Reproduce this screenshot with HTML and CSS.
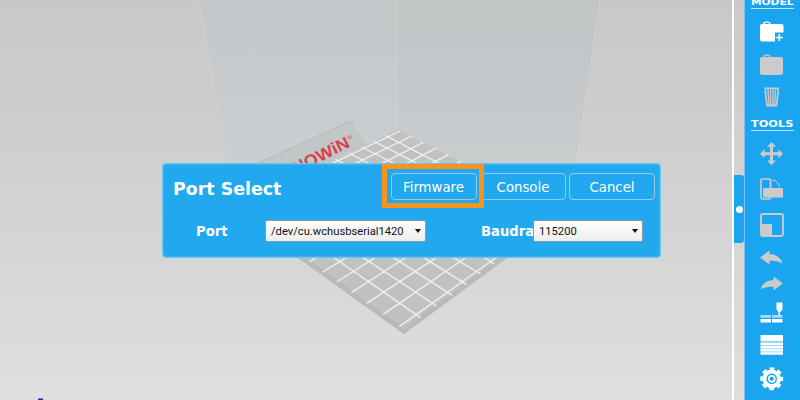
FILE: index.html
```html
<!DOCTYPE html>
<html lang="en">
<head>
<meta charset="utf-8">
<title>Port Select</title>
<link rel="stylesheet" href="styles.css">
</head>
<body>
<div class="app">
  <main class="viewport">
    <svg class="scene" width="732" height="400" viewBox="0 0 732 400">
      <defs>
        <linearGradient id="wallL" x1="0" y1="0" x2="0" y2="1"><stop offset="0" stop-color="#c3c7ca"/><stop offset="1" stop-color="#cbcfd1"/></linearGradient>
        <linearGradient id="wallR" x1="0" y1="0" x2="0" y2="1"><stop offset="0" stop-color="#c2c5c5"/><stop offset=".4" stop-color="#c3c7ca"/><stop offset="1" stop-color="#cacdce"/></linearGradient>
      </defs>
      <path d="M199 0H396V170H229Z" fill="url(#wallL)"/>
      <path d="M396 0H600L574 170H396Z" fill="url(#wallR)"/>
      <path d="M199 0L229 170M396.3 0V130" stroke="#d0d1d1" fill="none"/>
      <path d="M600 0L574 170" stroke="#cbcccc" fill="none"/>
      <path d="M250 168L347 123Q350 121 352.500 123L368 146L320 172Z" fill="#c2c6c7"/>
      <path d="M250 167L348 122.500Q351 121 353 124" stroke="#b9bec0" stroke-width="1.500" fill="none"/>
      <text class="brand" transform="matrix(.88 -.44 .45 .87 284 180)" x="0" y="0" textLength="76" lengthAdjust="spacingAndGlyphs">ANOWiN</text>
      <text class="mark" x="348.500" y="140" transform="rotate(-25 348.500 140)">®</text>
      <path d="M397 130L566 214L404 334L235 212Z" fill="#c1c1c1"/>
      <path d="M298 258L404 334L507 258L500 258L404 328L307 258Z" fill="#b9b9b9"/>
      <g class="grid" transform="translate(195 0) scale(.33333)">
        <path d="M615 393L400 496M650 408L462 500M685 427L530 506M722 445L600 508M760 464L680 506M797 484L750 508M572 407L770 510M538 424L700 508M500 441L630 507M462 459L550 506M422 478L480 508"/>
      </g>
      <g class="grid" transform="translate(280 250) scale(.33333)">
        <path d="M88 36L120 16M128 66L200 22M170 96L290 20M214 128L380 21M260 160L470 22M309 194L560 21M358 230L655 18M422 203L150 15M470 168L245 20M517 136L335 19M559 103L425 19M602 72L515 20M643 42L605 18"/>
      </g>
      <path d="M38 400v-1.500h5v1.500z" fill="#2222b0"/>
    </svg>
    <section class="dialog">
      <header class="dialog-head">
        <h1>Port Select</h1>
        <button class="btn highlighted">Firmware</button>
        <button class="btn">Console</button>
        <button class="btn">Cancel</button>
      </header>
      <div class="fields">
        <label class="port-label">Port</label>
        <div class="select port"><span>/dev/cu.wchusbserial1420</span></div>
        <label class="baud-label">Baudra</label>
        <div class="select baud"><span>115200</span></div>
      </div>
    </section>
  </main>
  <div class="gutter"><div class="handle"><i></i></div></div>
  <aside class="sidebar">
    <h2 class="model"><span>MODEL</span></h2>
    <svg viewBox="0 0 24 24" fill="#fff"><path d="M0 6Q0 4 2 4H3Q3 1.500 5.500 1.500H8Q10 1.500 11 4H21.500Q23.500 4 23.500 6V12.500H15V21.500H2Q0 21.500 0 19.500Z"/><path d="M4.500 4Q4.500 2.800 6 2.800H8Q9 3 9.500 4Z" fill="#1aa5f0"/><path d="M19.300 14V21M15.800 17.500H22.800" stroke="#fff" stroke-width="1.600"/></svg>
    <svg viewBox="0 0 24 24" fill="#cbcbcb"><path d="M0 6Q0 4 2 4H3Q3 1.500 5.500 1.500H8Q10 1.500 11 4H21Q23 4 23 6V20Q23 22 21 22H2Q0 22 0 20Z"/><path d="M4.500 4Q4.500 2.800 6 2.800H8Q9 3 9.500 4Z" fill="#1aa5f0"/></svg>
    <svg viewBox="0 0 24 24" fill="none" stroke="#cbcbcb"><path d="M4.300 3.500H19M5.200 5L7 20.500H16.500L18.300 5" stroke-width="1.800"/><path d="M8 5L9 20M10.500 5L10.800 20M13 5L12.800 20M15.500 5L14.700 20" stroke-width="1.350"/></svg>
    <h2 class="tools"><span>TOOLS</span></h2>
    <svg viewBox="0 0 24 24" fill="#cbcbcb"><path d="M11.500 0L16 4.800H13V10.200H18.500V7.200L23 11.700L18.500 16.200V13.200H13V18.500H16L11.500 23.200L7 18.500H10V13.200H4.700V16.200L0 11.700L4.700 7.200V10.200H10V4.800H7Z"/></svg>
    <svg viewBox="0 0 24 24" fill="none" stroke="#cbcbcb"><rect x="1" y="2" width="9.500" height="20" rx="1.500" stroke-width="1.700"/><rect x="3" y="11" width="20" height="9.500" fill="#cbcbcb" stroke="none"/><path d="M12 3Q18.500 3.500 19.500 10"/></svg>
    <svg viewBox="0 0 24 24" fill="none" stroke="#cbcbcb"><rect x="1" y="1" width="22" height="22" rx="1.500" stroke-width="1.900"/><path d="M2 11H12V22H2Z" fill="#cbcbcb" stroke="none"/></svg>
    <svg viewBox="0 0 24 24" fill="#cbcbcb"><path d="M0 11.500L9.500 4.500V8Q20 8.500 22.500 17.500Q17 14 9.500 14.800V18.500Z"/></svg>
    <svg viewBox="0 0 24 24" fill="#cbcbcb"><path d="M23 11.500L13.500 4.500V8Q3 8.500 .5 17.500Q6 14 13.500 14.800V18.500Z"/></svg>
    <svg viewBox="0 0 24 24" fill="#fff"><path d="M16.500 1.500H22.500V8.500L20.500 11H20V14L18.500 14.500V11L16.500 8.500ZM.5 18H11V21.500H.5ZM12 18H22.500V21.500H12Z"/><path d="M.5 14H11V16.800H.5ZM12 14H22.500V16.800H12Z" fill="#a9dbf7"/></svg>
    <svg viewBox="0 0 24 24" fill="#fff"><path d="M.5 2H23V8.500H.5ZM.5 9.500H23V12H.5ZM.5 12.800H23V15.500H.5ZM.5 16.300H23V18.500H.5ZM.5 19.200H23V21.800H.5Z"/><path d="M.5 9.500H23V20H.5Z" opacity=".45"/></svg>
    <svg viewBox="0 0 24 24" fill="none" stroke="#fff"><circle cx="11.700" cy="11.800" r="7.300" stroke-width="4"/><circle cx="11.700" cy="11.800" r="9.700" stroke-width="3.600" stroke-dasharray="4.400 3.218" stroke-dashoffset="2.200"/><circle cx="11.700" cy="11.800" r="3" stroke-width="1.700"/></svg>
  </aside>
</div>
</body>
</html>
```
FILE: styles.css
```css
* { box-sizing: border-box; }
body { margin: 0; overflow: hidden; }
.app {
  display: flex;
  width: 800px;
  height: 400px;
  font-family: "DejaVu Sans", sans-serif;
}
.viewport {
  position: relative;
  width: 732px;
  background: linear-gradient(#c8c8c8, #d1d1d1 45%, #dfdfdf);
}
.scene { display: block; }
.grid path { stroke: #f0f0f0; stroke-width: 4; fill: none; }
.brand { font: bold 17px "Liberation Sans", sans-serif; fill: #dc4047; }
.mark { font: 6px "Liberation Sans", sans-serif; fill: #dc4047; }
.dialog {
  position: absolute;
  left: 162px;
  top: 163px;
  width: 499px;
  height: 95px;
  padding: 9px 5px 0 11px;
  color: #fff;
  background: #22a8ee;
  border: 1px solid #6dc3ef;
  border-radius: 4px;
  box-shadow: inset 0 0 2px #78caf4;
}
.dialog-head { display: flex; gap: 3px; align-items: center; height: 27px; }
.dialog h1 { flex: 1; margin: 4px 0 0 -1px; font-size: 17.400px; line-height: 22px; }
.btn {
  width: 86px;
  height: 27px;
  padding: 1px 0 0;
  color: #fff;
  font: 13.300px "DejaVu Sans", sans-serif;
  background: none;
  border: 1px solid #9ac9e5;
  border-radius: 4px;
}
.highlighted { position: relative; padding-right: 1px; }
.highlighted::after {
  content: "";
  position: absolute;
  inset: -10px -8px -9px -10px;
  border: 5px solid #f7941d;
}
.fields { display: flex; align-items: center; height: 22px; margin-top: 20px; }
.fields label { font-size: 13.200px; font-weight: bold; white-space: nowrap; }
.port-label { width: 69px; margin-left: 22px; }
.baud-label { width: 52px; margin-left: 55px; }
.select {
  display: flex;
  align-items: center;
  justify-content: space-between;
  height: 22px;
  padding: 0 4px 0 5px;
  color: #111;
  font: 11.200px Roboto, sans-serif;
  background: linear-gradient(#fff, #ededed);
  border: 1px solid #8b9aa4;
  border-radius: 2px;
}
.select::after { content: ""; border: 3px solid transparent; border-top: 4px solid #111; border-bottom: 0; }
.port { width: 161px; }
.baud { width: 110px; }
.gutter {
  display: flex;
  align-items: flex-start;
  width: 13px;
  padding-top: 175px;
  background: linear-gradient(#cacaca, #dedede);
  border-left: 3px solid #fff;
  margin-left: -1px;
}
.handle {
  display: flex;
  align-items: center;
  justify-content: center;
  width: 10px;
  height: 68px;
  background: #1aa5f0;
  border-radius: 0 3px 3px 0;
}
.handle i { width: 7px; height: 7px; background: #fff; border-radius: 50%; }
.sidebar {
  display: grid;
  grid-template-rows: 20px 33px 32px 32px 25px 35px 36px 33px 26px 29px 32px 34px 33px;
  align-items: start;
  justify-items: center;
  width: 56px;
  background: #1aa5f0;
  border-left: 1px solid #80c3e8;
  border-right: 1px solid #6c8796;
}
.sidebar svg { width: 24px; height: 24px; }
.sidebar h2 {
  width: 43px;
  margin: 0;
  color: #fff;
  font: bold 8.500px/12px "DejaVu Sans", sans-serif;
  border-bottom: 1px solid #bfe4fa;
}
.sidebar h2 span { display: block; width: 32px; transform: scaleX(1.330); transform-origin: left; }
.sidebar .model { margin-top: -4px; }
.sidebar .model span { transform: scaleX(1.250); }
.sidebar .tools { margin-top: 1px; }
```
